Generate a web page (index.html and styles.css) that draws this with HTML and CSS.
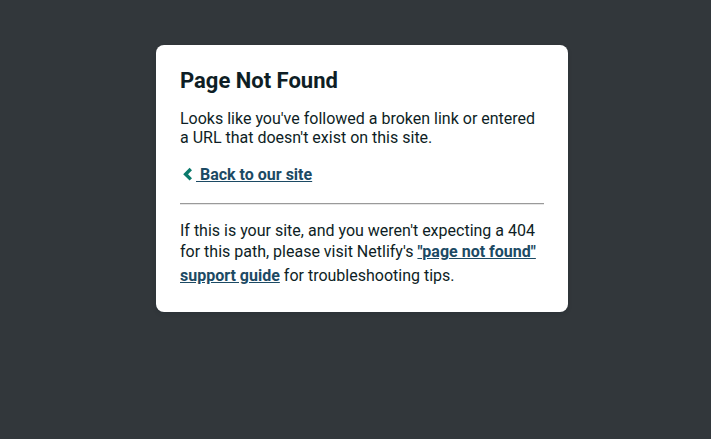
FILE: index.html
```html
<!DOCTYPE html>
<html lang="en">
<head>
<meta charset="utf-8">
<title>Page not found</title>
<link rel="stylesheet" href="styles.css">
</head>
<body>
<div class="main">
  <div class="card">
    <h1>Page Not Found</h1>
    <p>Looks like you've followed a broken link or entered a URL that doesn't exist on this site.</p>
    <p><a class="back" href="#"><svg class="chev" width="16" height="16" viewBox="0 0 16 16"><path d="M10.8 3 L5.6 8.2 L10.8 13.4" fill="none" stroke="#0a7a6c" stroke-width="3.4" stroke-linejoin="miter"/></svg> Back to our site</a></p>
    <hr>
    <p class="last">If this is your site, and you weren't expecting a 404 for this path, please visit Netlify's <a href="#">"page not found" support guide</a> for troubleshooting tips.</p>
  </div>
</div>
</body>
</html>
```
FILE: styles.css
```css
html, body {
  margin: 0;
  padding: 0;
}
body {
  background: #32373b;
  color: #fff;
  font-family: Roboto, "Liberation Sans", Arial, sans-serif;
  -webkit-font-smoothing: antialiased;
  height: 439px;
  overflow: hidden;
}
.main {
  padding: 45px 0 0 156px;
}
.card {
  width: 364px;
  padding: 24px;
  background: #fff;
  color: rgb(14, 30, 37);
  border-radius: 8px;
  box-shadow: 0 2px 4px 0 rgba(14, 30, 37, 0.16);
  font-size: 16px;
}
h1 {
  margin: 0;
  font-size: 22px;
  line-height: 24px;
  font-weight: 700;
}
p {
  margin: 16px 0;
}
p.last {
  margin-bottom: 0;
}
a {
  font-weight: 700;
  line-height: 24px;
  color: #1c4a64;
  text-decoration: underline;
}
.chev {
  position: relative;
  top: 2px;
}
hr {
  margin: 0;
  border: 0;
  border-top: 1px solid #9a9a9a;
  border-bottom: 1px solid #e6e6e6;
}
```
